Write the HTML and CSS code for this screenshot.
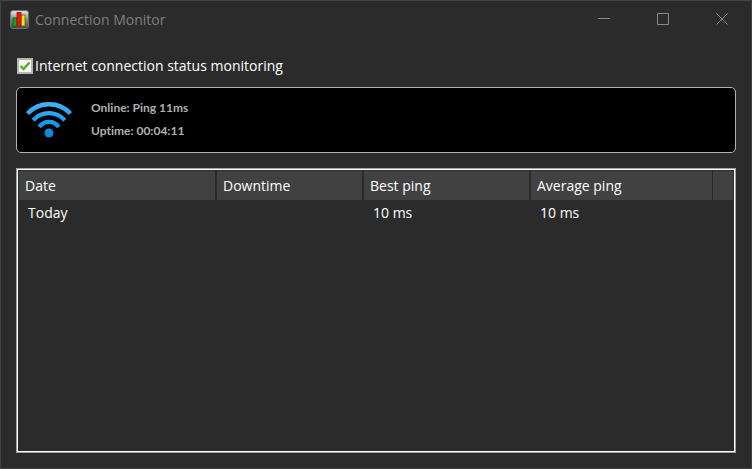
FILE: index.html
```html
<!DOCTYPE html>
<html lang="en">
<head>
    <meta charset="UTF-8">
    <meta name="viewport" content="width=device-width, initial-scale=1.0">
    <title>Connection Monitor</title>
    <link rel="stylesheet" href="styles.css">
</head>
<body>

    <div class="window">
        <!-- Title bar -->
        <header class="titlebar">
            <svg class="app-icon" width="20" height="20" viewBox="0 0 20 20">
                <defs>
                    <linearGradient id="tile" x1="0" y1="0" x2="0" y2="1">
                        <stop offset="0" stop-color="#e8e8e8"/>
                        <stop offset="0.5" stop-color="#8a8a8a"/>
                        <stop offset="1" stop-color="#4a4a4a"/>
                    </linearGradient>
                </defs>
                <rect x="0.5" y="0.5" width="18" height="18" rx="2.5" fill="url(#tile)" stroke="#6e6e6e"/>
                <rect x="3" y="8" width="4" height="8" fill="#0fae12" stroke="#0a4d08" stroke-width="0.8"/>
                <rect x="11" y="5" width="4" height="11" fill="#f4e80c" stroke="#6b5a04" stroke-width="0.8"/>
                <rect x="7" y="2.5" width="4" height="13.5" fill="#ea1414" stroke="#a00808" stroke-width="0.8"/>
            </svg>
            <h1>Connection Monitor</h1>
            <div class="controls">
                <button type="button" aria-label="Minimize">
                    <svg width="12" height="12" viewBox="0 0 12 12"><path d="M0 5.5h12"/></svg>
                </button>
                <button type="button" aria-label="Maximize">
                    <svg width="12" height="12" viewBox="0 0 12 12"><path d="M0.5 0.5h11v11h-11z"/></svg>
                </button>
                <button type="button" aria-label="Close">
                    <svg width="12" height="12" viewBox="0 0 12 12"><path d="M0.5 0.5l11 11M11.5 0.5l-11 11"/></svg>
                </button>
            </div>
        </header>

        <main class="content">
            <label class="monitoring">
                <input type="checkbox" checked>
                <span>Internet connection status monitoring</span>
            </label>

            <!-- Status panel -->
            <section class="status">
                <svg class="wifi" width="46" height="36" viewBox="0 0 46 36">
                    <defs>
                        <linearGradient id="signal" gradientUnits="userSpaceOnUse" x1="0" y1="0" x2="0" y2="36">
                            <stop offset="0" stop-color="#45b4f8"/>
                            <stop offset="0.5" stop-color="#1b9df0"/>
                            <stop offset="1" stop-color="#0e7fd0"/>
                        </linearGradient>
                    </defs>
                    <g fill="none" stroke="url(#signal)" stroke-width="4.4">
                        <path d="M1.6 11.6C13 -0.8 33 -0.8 44.4 11.6"/>
                        <path d="M7.2 18.2C15.8 8.8 30.2 8.8 38.8 18.2"/>
                        <path d="M13.2 25C18.4 18.2 27.6 18.2 32.8 25"/>
                    </g>
                    <circle cx="23" cy="31" r="4.5" fill="url(#signal)"/>
                </svg>
                <div class="status-text">
                    <p>Online: Ping 11ms</p>
                    <p>Uptime: 00:04:11</p>
                </div>
            </section>

            <!-- History -->
            <div class="history">
                <table>
                    <colgroup>
                        <col class="col-date">
                        <col class="col-downtime">
                        <col class="col-best">
                        <col class="col-average">
                        <col>
                    </colgroup>
                    <thead>
                        <tr>
                            <th>Date</th>
                            <th>Downtime</th>
                            <th>Best ping</th>
                            <th>Average ping</th>
                            <th></th>
                        </tr>
                    </thead>
                    <tbody>
                        <tr>
                            <td>Today</td>
                            <td></td>
                            <td>10 ms</td>
                            <td>10 ms</td>
                            <td></td>
                        </tr>
                    </tbody>
                </table>
            </div>
        </main>
    </div>

</body>
</html>
```
FILE: styles.css
```css
* {
    box-sizing: border-box;
}
body {
    margin: 0;
    background: #2b2b2b;
    color: #ffffff;
    font-family: "Open Sans", "Noto Sans", sans-serif;
    font-size: 14px;
    line-height: 20px;
}
.window {
    display: flex;
    flex-direction: column;
    min-height: 100vh;
    border: 1px solid #434343;
}
.titlebar {
    display: flex;
    align-items: center;
    height: 38px;
    padding-left: 9px;
}
.titlebar h1 {
    flex: 1;
    margin: 0 0 0 5px;
    color: #7f7f7f;
    font-size: 14px;
    font-weight: normal;
}
.controls {
    display: flex;
    align-self: flex-start;
}
.controls button {
    display: flex;
    align-items: center;
    justify-content: center;
    width: 59px;
    height: 36px;
    padding: 0;
    border: none;
    background: none;
}
.controls svg {
    fill: none;
    stroke: #8a8a8a;
}
.content {
    display: flex;
    flex: 1;
    flex-direction: column;
    padding: 17px 15px 15px;
}
.monitoring {
    display: flex;
    align-items: center;
    align-self: flex-start;
    gap: 2px;
}
.monitoring input {
    appearance: none;
    width: 16px;
    height: 16px;
    margin: 0 0 0 1px;
    border: 2px solid #b4b4b4;
    background: #f6f6f6 url('data:image/svg+xml,<svg xmlns="http://www.w3.org/2000/svg" viewBox="0 0 12 12"><path d="M1.5 6l3 3 6-6.5" fill="none" stroke="%2355ad1c" stroke-width="2.4"/></svg>') no-repeat center;
}
.monitoring input:not(:checked) {
    background-image: none;
}
.status {
    display: flex;
    align-items: center;
    gap: 19px;
    height: 66px;
    margin-top: 11px;
    padding-left: 9px;
    border: 1px solid #b0b0b0;
    border-radius: 5px;
    background: #000000;
}
.status-text {
    padding-bottom: 2px;
    color: #b0b0b0;
    font-family: Lato, "Open Sans", sans-serif;
    font-size: 12px;
    font-weight: bold;
    font-variant-ligatures: none;
    line-height: 23px;
}
.status-text p {
    margin: 0;
}
.history {
    flex: 1;
    margin-top: 15px;
    padding: 1px;
    border: 1px solid #a0a0a6;
    outline: 1px solid #ffffff;
    outline-offset: -2px;
}
.history table {
    width: 100%;
    padding: 1px;
    border-spacing: 0;
    table-layout: fixed;
}
.col-date {
    width: 198px;
}
.col-downtime {
    width: 147px;
}
.col-best {
    width: 167px;
}
.col-average {
    width: 182px;
}
.history th {
    height: 29px;
    padding: 0 6px;
    border-right: 2px solid #2b2b2b;
    background: #414141;
    font-weight: normal;
    text-align: left;
}
.history th:nth-child(4) {
    border-right-width: 1px;
}
.history th:last-child {
    border-right: none;
}
.history td {
    height: 26px;
    padding: 0 9px;
}
```
